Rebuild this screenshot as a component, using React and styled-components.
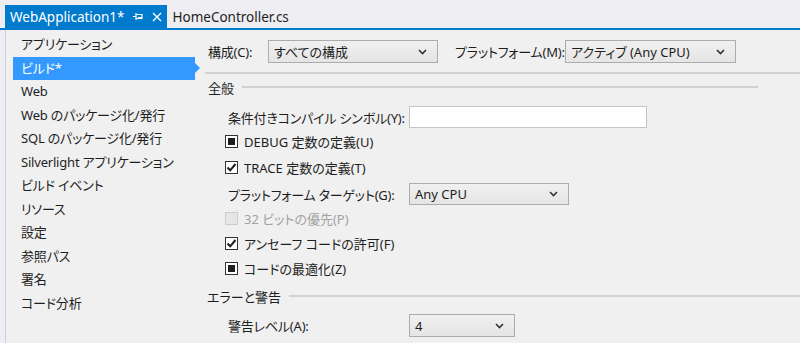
import React from "react";
import { styled, createGlobalStyle } from "styled-components";

const GlobalStyle = createGlobalStyle`
  body {
    margin: 0;
    background: #eeeef2;
    font-family: "Noto Sans", "Noto Sans CJK JP", sans-serif;
    font-size: 13px;
    font-feature-settings: "palt";
    color: #1e1e1e;
  }
`;

const Page = styled.div`
  width: 800px;
  height: 343px;
  overflow: hidden;
  display: flex;
  flex-direction: column;
`;

const TabBar = styled.div`
  display: flex;
  align-items: flex-end;
  height: 28px;
  padding-left: 5px;
  border-bottom: 2px solid #007acc;
`;

const Tab = styled.div`
  display: flex;
  align-items: center;
  height: 23px;
  padding: 0 5px;
  font-size: 13.5px;
  background: ${(p) => (p.$active ? "#007acc" : "transparent")};
  color: ${(p) => (p.$active ? "#ffffff" : "#1e1e1e")};
`;

const TabIcon = styled.span`
  display: flex;
  align-items: center;
  margin-left: ${(p) => p.$gap}px;
`;

const Body = styled.div`
  flex: 1;
  display: flex;
  margin-left: 5px;
  border-left: 1px solid #cccedb;
  background: #f0f0f0;
`;

const Sidebar = styled.div`
  width: 194px;
  padding-top: 3px;
  flex-shrink: 0;
`;

const NavItem = styled.div`
  position: relative;
  height: 23.5px;
  line-height: 23.5px;
  margin-left: 7px;
  margin-right: 5px;
  padding-left: 8px;
  white-space: nowrap;
  letter-spacing: -0.2px;
  background: ${(p) => (p.$active ? "#3399ff" : "transparent")};
  color: ${(p) => (p.$active ? "#ffffff" : "#1e1e1e")};
  ${(p) =>
    p.$active &&
    `
    &::after {
      content: "";
      position: absolute;
      right: -5px;
      top: 6px;
      border-top: 5.5px solid transparent;
      border-bottom: 5.5px solid transparent;
      border-left: 5px solid #3399ff;
    }
  `}
`;

const Content = styled.div`
  flex: 1;
  padding-top: 10px;
`;

const TopRow = styled.div`
  display: flex;
  align-items: center;
  height: 23px;
  padding-left: 8px;
`;

const Label = styled.div`
  width: ${(p) => p.$w}px;
  flex-shrink: 0;
  white-space: nowrap;
  letter-spacing: -0.2px;
  color: ${(p) => (p.$disabled ? "#a2a2a2" : "#1e1e1e")};
`;

const SelectBox = styled.div`
  box-sizing: border-box;
  display: flex;
  align-items: center;
  justify-content: space-between;
  width: ${(p) => p.$w}px;
  height: ${(p) => p.$h || 23}px;
  padding: 0 10px 0 5px;
  border: 1px solid #acacac;
  background: linear-gradient(#f0f0f0, #e5e5e5);
  margin-right: ${(p) => p.$mr || 0}px;
  white-space: nowrap;
`;

const TextInput = styled.div`
  box-sizing: border-box;
  width: ${(p) => p.$w}px;
  height: 22px;
  background: #ffffff;
  border: 1px solid #c4c4c4;
`;

const Divider = styled.div`
  margin: 9px 0 0 5px;
  border-top: 2px solid #d2d2d2;
`;

const Section = styled.div`
  display: flex;
  align-items: center;
  height: ${(p) => p.$h}px;
  padding-left: ${(p) => p.$pl}px;
  margin-right: ${(p) => p.$mr || 0}px;
`;

const SectionTitle = styled.span`
  white-space: nowrap;
  margin-right: 8px;
`;

const SectionLine = styled.div`
  flex: 1;
  border-top: 2px solid #d2d2d2;
  margin-top: -1px;
`;

const FieldRow = styled.div`
  display: flex;
  align-items: center;
  height: ${(p) => p.$h}px;
  margin-top: ${(p) => p.$mt || 0}px;
  padding-left: 28px;
`;

const CheckRow = styled.div`
  display: flex;
  align-items: center;
  height: ${(p) => p.$h}px;
  padding-left: 25px;
  color: ${(p) => (p.$disabled ? "#a2a2a2" : "#1e1e1e")};
`;

const Box = styled.span`
  box-sizing: border-box;
  display: flex;
  align-items: center;
  justify-content: center;
  width: 13px;
  height: 13px;
  margin-right: 6px;
  background: ${(p) => (p.$disabled ? "#e6e6e6" : "#ffffff")};
  border: 1px solid ${(p) => (p.$disabled ? "#cccccc" : "#333333")};
`;

const Dot = styled.span`
  width: 7px;
  height: 7px;
  background: #1e1e1e;
`;

const Chevron = () => (
  <svg width="9" height="6" viewBox="0 0 9 6">
    <polyline points="1,1 4.5,4.5 8,1" fill="none" stroke="#333" strokeWidth="1.6" />
  </svg>
);

const Check = () => (
  <svg width="11" height="11" viewBox="0 0 11 11">
    <polyline points="1.5,5.5 4.2,8.3 9.5,2" fill="none" stroke="#1e1e1e" strokeWidth="2" />
  </svg>
);

const Select = ({ value, w, h, mr }) => (
  <SelectBox $w={w} $h={h} $mr={mr}>
    <span>{value}</span>
    <Chevron />
  </SelectBox>
);

const CheckBox = ({ state, disabled, children, h }) => (
  <CheckRow $h={h} $disabled={disabled}>
    <Box $disabled={disabled}>
      {state === "checked" && <Check />}
      {state === "mixed" && <Dot />}
    </Box>
    {children}
  </CheckRow>
);

const navItems = [
  "アプリケーション",
  "ビルド*",
  "Web",
  "Web のパッケージ化/発行",
  "SQL のパッケージ化/発行",
  "Silverlight アプリケーション",
  "ビルド イベント",
  "リソース",
  "設定",
  "参照パス",
  "署名",
  "コード分析",
];

const App = () => {
  return (
    <>
      <GlobalStyle />
      <Page>
        <TabBar>
          <Tab $active>
            WebApplication1*
            <TabIcon $gap={9}>
              <svg width="11" height="9" viewBox="0 0 11 9">
                <path d="M0 4.5H3M3 1V8M3 2.5H9V6.5H3M5 5.5H9" fill="none" stroke="#fff" strokeWidth="1.2" />
              </svg>
            </TabIcon>
            <TabIcon $gap={8}>
              <svg width="10" height="10" viewBox="0 0 10 10">
                <path d="M1 1L9 9M9 1L1 9" stroke="#fff" strokeWidth="1.4" />
              </svg>
            </TabIcon>
          </Tab>
          <Tab>HomeController.cs</Tab>
        </TabBar>
        <Body>
          <Sidebar>
            {navItems.map((item) => (
              <NavItem key={item} $active={item === "ビルド*"}>
                {item}
              </NavItem>
            ))}
          </Sidebar>
          <Content>
            <TopRow>
              <Label $w={60}>構成(C):</Label>
              <Select value="すべての構成" w={170} mr={17} />
              <Label $w={110}>プラットフォーム(M):</Label>
              <Select value="アクティブ (Any CPU)" w={171} />
            </TopRow>
            <Divider />
            <Section $h={26} $pl={8} $mr={42}>
              <SectionTitle>全般</SectionTitle>
              <SectionLine />
            </Section>
            <FieldRow $h={22} $mt={6}>
              <Label $w={181}>条件付きコンパイル シンボル(Y):</Label>
              <TextInput $w={238} />
            </FieldRow>
            <CheckBox state="mixed" h={26}>DEBUG 定数の定義(U)</CheckBox>
            <CheckBox state="checked" h={26}>TRACE 定数の定義(T)</CheckBox>
            <FieldRow $h={22} $mt={3}>
              <Label $w={181}>プラットフォーム ターゲット(G):</Label>
              <Select value="Any CPU" w={160} h={22} />
            </FieldRow>
            <CheckBox disabled h={26}>32 ビットの優先(P)</CheckBox>
            <CheckBox state="checked" h={24}>アンセーフ コードの許可(F)</CheckBox>
            <CheckBox state="mixed" h={26}>コードの最適化(Z)</CheckBox>
            <Section $h={30} $pl={7}>
              <SectionTitle>エラーと警告</SectionTitle>
              <SectionLine />
            </Section>
            <FieldRow $h={23} $mt={3}>
              <Label $w={181}>警告レベル(A):</Label>
              <Select value="4" w={106} />
            </FieldRow>
          </Content>
        </Body>
      </Page>
    </>
  );
};

export default App;
